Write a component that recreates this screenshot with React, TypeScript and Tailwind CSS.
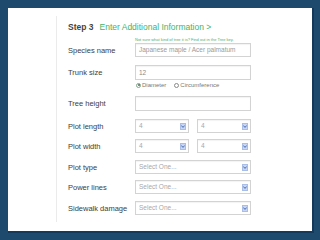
import React from 'react';

// Small blue dropdown button used by the old-style selects
function Arrow() {
    return (
        <span className="ml-auto w-[6px] h-[7px] bg-[#c6d6f4] border border-[#a9bee6] flex items-center justify-center">
            <svg width="4" height="3" viewBox="0 0 4 3">
                <path d="M0.3 0.5L2 2.4L3.7 0.5" stroke="#3b5fa8" strokeWidth="0.9" fill="none" />
            </svg>
        </span>
    );
}

function Select({ value, className }: { value: string; className: string }) {
    return (
        <div className={`h-[14px] border border-[#d3d3d3] bg-white flex items-center pl-[3px] pr-[2px] text-[6.5px] text-[#a8a8a8] shadow-[inset_0_1px_1px_rgba(0,0,0,0.05)] ${className}`}>
            <span>{value}</span>
            <Arrow />
        </div>
    );
}

function Row({ label, children, className }: { label: string; children: React.ReactNode; className: string }) {
    return (
        <div className={`flex items-center ${className}`}>
            <div className="w-[67px] shrink-0 text-[7.5px] leading-[9px] text-[#3d3d3d]">{label}</div>
            {children}
        </div>
    );
}

export default function App() {
    return (
        <div className="w-[320px] h-[240px] bg-[#1e4b6d] p-2 font-['Liberation_Sans',Arial,sans-serif]">
            <div className="h-[223px] bg-white flex shadow-[1px_1px_0_1px_#15395a]">
                {/* left margin + faint divider */}
                <div className="w-[48px] shrink-0" />
                <div className="w-px bg-[#ebebeb] mt-2 mb-[9px]" />

                <div className="pl-[11px]">
                    {/* Heading */}
                    <div className="mt-[14px] h-[10px] leading-[10px] text-[8.5px] whitespace-nowrap">
                        <span className="font-bold text-[#444]">Step 3</span>
                        <span className="ml-[6px] text-[#3db56b]">Enter Additional Information &gt;</span>
                    </div>

                    <div className="mt-[5px] h-[5px] leading-[5px] pl-[67px] text-[4px] text-[#4bb06f] whitespace-nowrap">
                        Not sure what kind of tree it is? Find out in the Tree key.
                    </div>

                    <Row label="Species name" className="mt-[1px]">
                        <div className="w-[116px] h-[14px] border border-[#d3d3d3] flex items-center pl-[3px] text-[6.5px] text-[#9a9a9a] whitespace-nowrap shadow-[inset_0_1px_1px_rgba(0,0,0,0.05)]">
                            Japanese maple / Acer palmatum
                        </div>
                    </Row>

                    <Row label="Trunk size" className="mt-[8px]">
                        <div className="w-[116px] h-[15px] border border-[#d3d3d3] flex items-center pl-[3px] text-[6.5px] text-[#8a8a8a] shadow-[inset_0_1px_1px_rgba(0,0,0,0.05)]">
                            12
                        </div>
                    </Row>

                    <div className="mt-[2px] h-[6px] pl-[68px] flex items-center text-[6px] text-[#777] whitespace-nowrap">
                        <span className="w-[5px] h-[5px] rounded-full border border-[#7fa888] flex items-center justify-center">
                            <span className="w-[2px] h-[2px] rounded-full bg-[#4f6b56]" />
                        </span>
                        <span className="ml-[1px]">Diameter</span>
                        <span className="ml-[8px] w-[5px] h-[5px] rounded-full border border-[#8a8a8a]" />
                        <span className="ml-[1px]">Circumference</span>
                    </div>

                    <Row label="Tree height" className="mt-[8px]">
                        <div className="w-[116px] h-[15px] border border-[#d3d3d3] shadow-[inset_0_1px_1px_rgba(0,0,0,0.05)]" />
                    </Row>

                    <Row label="Plot length" className="mt-[8px]">
                        <Select value="4" className="w-[54px]" />
                        <Select value="4" className="w-[54px] ml-[8px]" />
                    </Row>

                    <Row label="Plot width" className="mt-[6px]">
                        <Select value="4" className="w-[54px]" />
                        <Select value="4" className="w-[54px] ml-[8px]" />
                    </Row>

                    <Row label="Plot type" className="mt-[7px]">
                        <Select value="Select One..." className="w-[116px]" />
                    </Row>

                    <Row label="Power lines" className="mt-[6px]">
                        <Select value="Select One..." className="w-[116px]" />
                    </Row>

                    <Row label="Sidewalk damage" className="mt-[7px]">
                        <Select value="Select One..." className="w-[116px]" />
                    </Row>
                </div>
            </div>
        </div>
    );
}
